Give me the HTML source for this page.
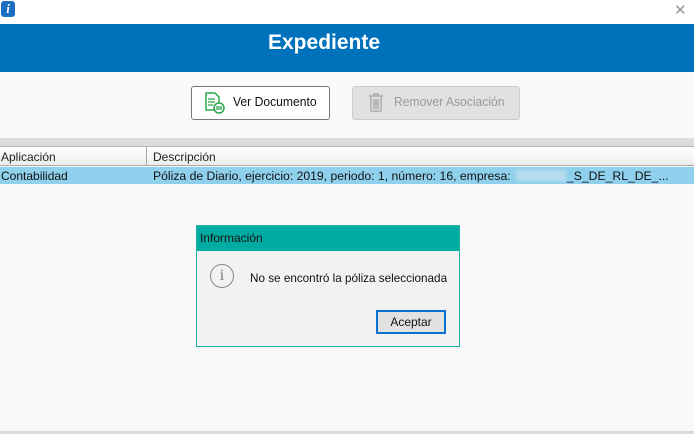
<!DOCTYPE html>
<html><head><style>
body{margin:0;width:694px;height:434px;background:#f9f9f9;font-family:"Liberation Sans",sans-serif;position:relative;overflow:hidden}
.a{position:absolute}
</style></head><body>
<div class="a" style="left:0;top:0;width:694px;height:24px;background:#fff"></div>
<div class="a" style="left:1px;top:1px;width:14px;height:16px;background:#1b6fc0;border-radius:3px;color:#fff;font:italic bold 13px 'Liberation Serif';text-align:center;line-height:16px">i</div>
<div class="a" style="left:674px;top:1px;color:#999;font-size:15px">✕</div>
<div class="a" style="left:0;top:24px;width:694px;height:48px;background:#0072bc"></div>
<div class="a" style="left:268px;top:31px;color:#fff;font-weight:bold;font-size:21px;line-height:24px">Expediente</div>
<div class="a" style="left:191px;top:86px;width:137px;height:32px;border:1px solid #777;border-radius:3px;background:#fff"></div>
<svg class="a" style="left:203px;top:91px" width="24" height="24" viewBox="0 0 24 24"><path d="M3 2h9l4 4v13H3z" fill="none" stroke="#2aa84a" stroke-width="1.5"/><path d="M5 8h7M5 11h7M5 14h5" stroke="#2aa84a" stroke-width="1.3"/><circle cx="16" cy="17" r="5" fill="#fff" stroke="#2aa84a" stroke-width="1.5"/><path d="M13 16h6M13 18h6" stroke="#2aa84a" stroke-width="1.3"/></svg>
<div class="a" style="left:233px;top:95px;font-size:12.5px;color:#111;transform:scaleX(0.97);transform-origin:left">Ver Documento</div>
<div class="a" style="left:352px;top:86px;width:166px;height:32px;border:1px solid #ccc;border-radius:3px;background:#e1e1e1"></div>
<svg class="a" style="left:366px;top:91px" width="20" height="24" viewBox="0 0 20 24"><path d="M3 5h14M8 5V3h4v2M5 5v15h10V5M8 8v10M10 8v10M12 8v10" fill="none" stroke="#aaa" stroke-width="1.4"/></svg>
<div class="a" style="left:394px;top:95px;font-size:12.5px;color:#9a9a9a;transform:scaleX(0.97);transform-origin:left">Remover Asociación</div>
<div class="a" style="left:0;top:138px;width:694px;height:8px;background:#dcdcdf"></div>
<div class="a" style="left:0;top:146px;width:694px;height:20px;background:linear-gradient(#fff,#ececec);border-top:1px solid #b8b8b8;border-bottom:1px solid #aaa;box-sizing:border-box"></div>
<div class="a" style="left:146px;top:147px;width:1px;height:19px;background:#aaa"></div>
<div class="a" style="left:1px;top:150px;font-size:12px;color:#222">Aplicación</div>
<div class="a" style="left:153px;top:150px;font-size:12px;color:#222">Descripción</div>
<div class="a" style="left:0;top:167px;width:694px;height:17px;background:#8fd0ec"></div>
<div class="a" style="left:1px;top:169px;font-size:12px;color:#111">Contabilidad</div>
<div class="a" style="left:153px;top:169px;font-size:12.2px;color:#111;white-space:nowrap">Póliza de Diario, ejercicio: 2019, periodo: 1, número: 16, empresa:</div>
<div class="a" style="left:516px;top:170px;width:50px;height:11px;background:#b7dcee;filter:blur(1.5px)"></div>
<div class="a" style="left:567px;top:169px;font-size:12.2px;color:#111;white-space:nowrap">_S_DE_RL_DE_...</div>
<div class="a" style="left:196px;top:225px;width:262px;height:120px;border:1px solid #1fb1a6;background:#f2f2f2"></div>
<div class="a" style="left:197px;top:226px;width:262px;height:25px;background:#00aca1;color:#111;font-size:12px;line-height:25px;padding-left:3px;box-sizing:border-box">Información</div>
<div class="a" style="left:210px;top:264px;width:24px;height:24px;border:1px solid #888;border-radius:50%;box-sizing:border-box;text-align:center;font:16px 'Liberation Serif';color:#777;line-height:22px">i</div>
<div class="a" style="left:250px;top:271px;font-size:12px;color:#111;transform:scaleX(0.975);transform-origin:left">No se encontró la póliza seleccionada</div>
<div class="a" style="left:376px;top:310px;width:70px;height:24px;border:2px solid #0a6fd1;background:#e1e1e1;box-sizing:border-box;font-size:12px;text-align:center;line-height:20px;color:#111">Aceptar</div>
<div class="a" style="left:0;top:431px;width:694px;height:3px;background:#d8d8de"></div>
</body></html>
